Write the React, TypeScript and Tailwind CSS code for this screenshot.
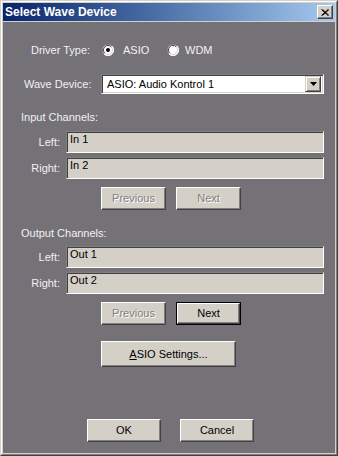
import React from "react";

const font = { fontFamily: '"Liberation Sans", Arial, sans-serif' };

function RaisedButton({
  children,
  width,
  height,
  disabled,
  isDefault,
}: {
  children: React.ReactNode;
  width: string;
  height: string;
  disabled?: boolean;
  isDefault?: boolean;
}) {
  const inner = (
    <div
      className={`flex items-center justify-center bg-[#d4d0c8] border border-t-white border-l-white border-r-[#404040] border-b-[#404040] shadow-[inset_-1px_-1px_0_#808080,inset_1px_1px_0_#d4d0c8] text-[11px] ${
        disabled ? "text-[#808080] [text-shadow:1px_1px_0_#ffffff]" : "text-black"
      } ${isDefault ? "w-full h-full" : `${width} ${height}`}`}
    >
      {children}
    </div>
  );
  if (isDefault) {
    return <div className={`${width} ${height} border border-black`}>{inner}</div>;
  }
  return inner;
}

function Field({ label, value }: { label: string; value: string }) {
  return (
    <div className="flex items-center h-[22px]">
      <div className="w-[57px] text-right text-[11px] text-[#f2f2f2]">{label}</div>
      <div className="ml-[6px] w-[258px] h-[22px] bg-[#d4d0c8] border border-t-[#808080] border-l-[#808080] border-r-white border-b-white shadow-[inset_1px_1px_0_#404040,inset_-1px_-1px_0_#d4d0c8] pl-[3px] pt-[1px] text-[11px] leading-[13px] text-black">
        {value}
      </div>
    </div>
  );
}

function Radio({ checked }: { checked?: boolean }) {
  return (
    <svg width="12" height="12" viewBox="0 0 12 12">
      <path d="M10.5 2.5 A6 6 0 0 0 1.5 10.5" fill="none" stroke="#808080" strokeWidth="1" />
      <circle cx="6" cy="6" r="5.5" fill="#ffffff" stroke="none" />
      <path d="M10 2 A5.5 5.5 0 0 0 2 10" fill="none" stroke="#808080" strokeWidth="1" />
      <path d="M9.2 2.8 A4.5 4.5 0 0 0 2.8 9.2" fill="none" stroke="#404040" strokeWidth="1" />
      <path d="M2 10 A5.5 5.5 0 0 0 10 2" fill="none" stroke="#ffffff" strokeWidth="1" />
      <path d="M2.8 9.2 A4.5 4.5 0 0 0 9.2 2.8" fill="none" stroke="#d4d0c8" strokeWidth="1" />
      {checked && <circle cx="6" cy="6" r="2" fill="#000000" />}
    </svg>
  );
}

export default function App() {
  return (
    <div style={font} className="w-[338px] h-[456px] border border-t-[#d4d0c8] border-l-[#d4d0c8] border-r-[#404040] border-b-[#404040]">
      <div className="w-full h-full border border-t-white border-l-white border-r-[#808080] border-b-[#808080] bg-[#d4d0c8] p-px flex flex-col">
        {/* Title bar */}
        <div className="h-[18px] flex items-center justify-between pl-[2px] pr-[2px] bg-gradient-to-r from-[#0a246a] to-[#a6caf0]">
          <span className="text-white font-bold text-[12px] leading-[14px]">Select Wave Device</span>
          <div className="w-[16px] h-[14px] bg-[#d4d0c8] border border-t-white border-l-white border-r-[#404040] border-b-[#404040] shadow-[inset_-1px_-1px_0_#808080] flex items-center justify-center">
            <svg width="8" height="7" viewBox="0 0 8 7">
              <path d="M0.5 0.5 L7 6.5 M1.5 0.5 L8 6.5 M7 0.5 L0.5 6.5 M8 0.5 L1.5 6.5" stroke="#000" strokeWidth="1" />
            </svg>
          </div>
        </div>
        {/* Content */}
        <div className="mt-px flex-1 bg-[#747177] flex flex-col text-[11px] leading-[13px] text-[#f2f2f2]">
          {/* Driver Type */}
          <div className="mt-[21px] h-[14px] flex items-center pl-[28px]">
            <div className="w-[71px]">Driver Type:</div>
            <div className="w-[65px] flex items-center">
              <Radio checked />
              <span className="ml-[9px]">ASIO</span>
            </div>
            <div className="flex items-center">
              <Radio />
              <span className="ml-[6px]">WDM</span>
            </div>
          </div>
          {/* Wave Device */}
          <div className="mt-[17px] h-[20px] flex items-center pl-[21px]">
            <div className="w-[77px]">Wave Device:</div>
            <div className="w-[223px] h-[20px] bg-white border border-t-[#808080] border-l-[#808080] border-r-white border-b-white shadow-[inset_1px_1px_0_#404040,inset_-1px_-1px_0_#d4d0c8] flex items-center justify-between pl-[5px] pr-[2px] text-black">
              <span>ASIO: Audio Kontrol 1</span>
              <div className="w-[16px] h-[16px] bg-[#d4d0c8] border border-t-[#d4d0c8] border-l-[#d4d0c8] border-r-[#404040] border-b-[#404040] shadow-[inset_1px_1px_0_#ffffff,inset_-1px_-1px_0_#808080] flex items-center justify-center">
                <svg width="7" height="4" viewBox="0 0 7 4">
                  <path d="M0 0 H7 L3.5 4 Z" fill="#000" />
                </svg>
              </div>
            </div>
          </div>
          {/* Input Channels */}
          <div className="mt-[17px] h-[13px] pl-[18px]">Input Channels:</div>
          <div className="mt-[7px]">
            <Field label="Left:" value="In 1" />
          </div>
          <div className="mt-[4px]">
            <Field label="Right:" value="In 2" />
          </div>
          <div className="mt-[8px] flex pl-[98px] gap-[10px]">
            <RaisedButton width="w-[65px]" height="h-[23px]" disabled>
              Previous
            </RaisedButton>
            <RaisedButton width="w-[65px]" height="h-[23px]" disabled>
              Next
            </RaisedButton>
          </div>
          {/* Output Channels */}
          <div className="mt-[17px] h-[13px] pl-[18px]">Output Channels:</div>
          <div className="mt-[6px]">
            <Field label="Left:" value="Out 1" />
          </div>
          <div className="mt-[4px]">
            <Field label="Right:" value="Out 2" />
          </div>
          <div className="mt-[8px] flex pl-[98px] gap-[10px]">
            <RaisedButton width="w-[65px]" height="h-[23px]" disabled>
              Previous
            </RaisedButton>
            <RaisedButton width="w-[65px]" height="h-[23px]" isDefault>
              Next
            </RaisedButton>
          </div>
          {/* ASIO Settings */}
          <div className="mt-[16px] flex pl-[98px]">
            <RaisedButton width="w-[135px]" height="h-[26px]">
              <span>
                <span className="underline">A</span>SIO Settings...
              </span>
            </RaisedButton>
          </div>
          {/* OK / Cancel */}
          <div className="mt-[52px] flex pl-[84px] gap-[19px]">
            <RaisedButton width="w-[74px]" height="h-[23px]">
              OK
            </RaisedButton>
            <RaisedButton width="w-[74px]" height="h-[23px]">
              Cancel
            </RaisedButton>
          </div>
        </div>
      </div>
    </div>
  );
}
